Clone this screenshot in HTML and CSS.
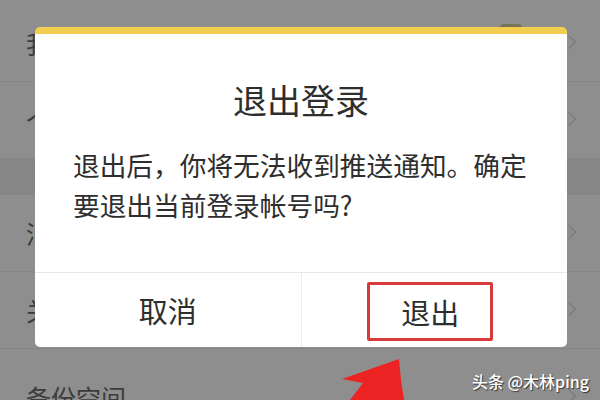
FILE: index.html
```html
<!DOCTYPE html>
<html lang="zh-CN">
<head>
  <meta charset="UTF-8">
  <title>退出登录</title>
  <link rel="stylesheet" href="styles.css">
</head>
<body>

<ul class="settings">
  <li class="row row-first">我的帐号<span class="badge"></span><i class="chev"></i></li>
  <li class="row">个人资料<i class="chev"></i></li>
  <li class="gap"></li>
  <li class="row">消息通知<i class="chev"></i></li>
  <li class="row">关于我们<i class="chev"></i></li>
  <li class="row row-last">备份空间<i class="chev"></i></li>
</ul>

<div class="dialog">
  <h2 class="dialog-title">退出登录</h2>
  <p class="dialog-text">退出后，你将无法收到推送通知。确定要退出当前登录帐号吗?</p>
  <div class="dialog-btns">
    <button class="btn">取消</button>
    <button class="btn"><span class="mark">退出</span></button>
  </div>
</div>

<svg class="arrow" width="90" height="50" viewBox="0 0 90 50">
  <polygon points="69,9 12,29 33,33 20,50 74,50 71,30" fill="#ec2323"/>
</svg>

<div class="watermark">头条 @木林ping</div>

</body>
</html>
```

FILE: styles.css
```css
body {
  margin: 0;
  width: 600px;
  height: 400px;
  overflow: hidden;
  position: relative;
  background: #8e8e8e;
  font-family: "Noto Sans CJK SC", "Noto Sans", sans-serif;
}
.settings {
  list-style: none;
  margin: 0;
  padding: 5px 0 0;
}
.row {
  height: 76px;
  display: flex;
  align-items: center;
  padding-left: 26px;
  font-size: 25px;
  color: #3c3c3c;
  border-bottom: 1px solid #858585;
  position: relative;
}
.row-last {
  height: 56px;
  padding-top: 20px;
  border-bottom: none;
}
.gap {
  height: 36px;
  background: #868686;
}
.chev {
  position: absolute;
  right: 26px;
  top: 50%;
  width: 9px;
  height: 9px;
  margin-top: -6px;
  border-top: 1px solid #777;
  border-right: 1px solid #777;
  transform: rotate(45deg);
}
.row-last .chev {
  margin-top: 4px;
}
.badge {
  position: absolute;
  left: 500px;
  top: 19px;
  width: 22px;
  height: 8px;
  border-radius: 4px;
  background: #7a7358;
}
.dialog {
  position: absolute;
  left: 35px;
  top: 27px;
  width: 532px;
  height: 313px;
  background: #fff;
  border-top: 7px solid #f3cd50;
  border-radius: 5px;
  display: flex;
  flex-direction: column;
  color: #2e2e2e;
}
.dialog-title {
  margin: 46px 0 0;
  font-size: 34px;
  font-weight: normal;
  line-height: 40px;
  text-align: center;
}
.dialog-text {
  margin: 25px 33px 0 38px;
  font-size: 26.7px;
  line-height: 40px;
  flex: 1;
}
.dialog-btns {
  display: flex;
  height: 74px;
  border-top: 1px solid #e6e6e6;
}
.btn {
  flex: 1;
  display: flex;
  align-items: center;
  justify-content: center;
  background: none;
  border: none;
  padding: 0;
  font-family: inherit;
  font-size: 29px;
  color: #2e2e2e;
}
.btn + .btn {
  border-left: 1px solid #ececec;
}
.mark {
  display: flex;
  align-items: center;
  justify-content: center;
  width: 120px;
  height: 53px;
  margin: 3px 8px 0 0;
  border: 3px solid #d8393b;
  border-radius: 2px;
}
.arrow {
  position: absolute;
  left: 330px;
  top: 350px;
}
.watermark {
  position: absolute;
  right: 11px;
  bottom: 7px;
  font-size: 16px;
  font-weight: 500;
  color: #fff;
  text-shadow: 1px 1px 1px #333;
}
```
